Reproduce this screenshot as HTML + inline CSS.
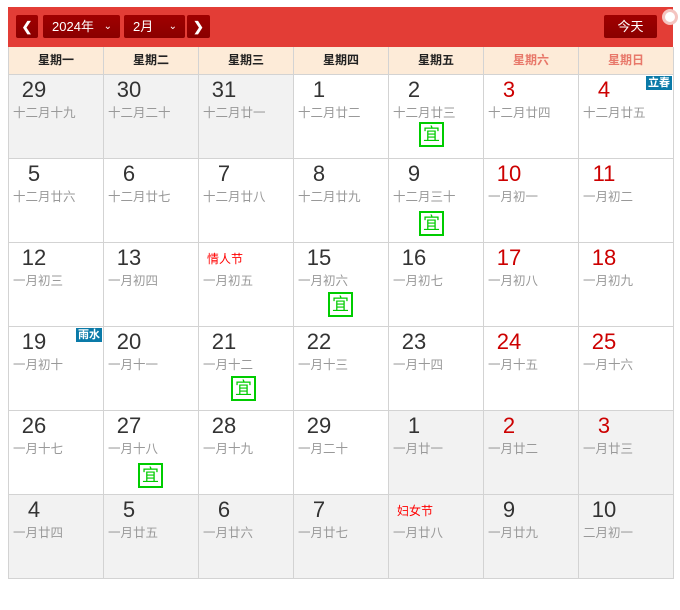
<!DOCTYPE html>
<html><head><meta charset="utf-8"><style>
*{margin:0;padding:0;box-sizing:border-box}
body{width:680px;height:610px;background:#fff;font-family:"Liberation Sans","Noto Sans CJK SC",sans-serif;position:relative;overflow:hidden}
.hd{position:absolute;left:8px;top:7px;width:665px;height:40px;background:#e33d36}
.btn{position:absolute;top:8px;height:23px;background:linear-gradient(#a00000,#8a0000);border-radius:2px;color:#fff;font-size:13px;line-height:23px}
.wk{position:absolute;left:8px;top:47px;width:666px;height:28px;background:#fdebd8;border-left:1px solid #d3d3d3;border-bottom:1px solid #d3d3d3;display:flex}
.wk div{width:95px;border-right:1px solid #d3d3d3;text-align:center;font-size:12px;font-weight:bold;line-height:27px;color:#222}
.wk div.r{color:#e8786a}
.grid{position:absolute;left:8px;top:75px;width:666px;border-left:1px solid #d3d3d3;display:grid;grid-template-columns:repeat(7,95px);grid-auto-rows:84px}
.c{position:relative;border-right:1px solid #d3d3d3;border-bottom:1px solid #d3d3d3;background:#fff}
.c.o{background:#f2f2f2}
.n{position:absolute;left:5px;top:2px;width:40px;text-align:center;font-size:22px;color:#333;line-height:26px}
.c.w .n{color:#cc0000}
.l{position:absolute;left:4px;top:27px;font-size:12.5px;color:#999;white-space:nowrap}
.f{position:absolute;left:8px;top:7px;font-size:12px;color:#f00}
.y{position:absolute;width:25px;height:25px;border:2px solid #0c0;color:#0c0;font-size:17px;line-height:21px;text-align:center}
.t{position:absolute;right:1px;top:1px;background:#0a7aa8;color:#fff;font-size:11px;font-weight:bold;line-height:14px;padding:0 2px}
</style></head><body>
<div class="hd">
 <div class="btn" style="left:8px;width:22px;text-align:center;font-weight:bold">&#10094;</div>
 <div class="btn" style="left:35px;width:77px;padding-left:9px">2024年 <span style="position:absolute;right:8px;font-size:10px">&#8964;</span></div>
 <div class="btn" style="left:116px;width:61px;padding-left:9px">2月 <span style="position:absolute;right:8px;font-size:10px">&#8964;</span></div>
 <div class="btn" style="left:179px;width:23px;text-align:center;font-weight:bold">&#10095;</div>
 <div class="btn" style="left:596px;width:53px;text-align:center">今天</div>
</div>
<div style="position:absolute;left:662px;top:9px;width:16px;height:16px;border-radius:50%;border:3px solid #f4c4c0;background:#fff"></div>
<div class="wk"><div>星期一</div><div>星期二</div><div>星期三</div><div>星期四</div><div>星期五</div><div class="r">星期六</div><div class="r">星期日</div></div>
<div class="grid">
<div class="c o"><div class="n">29</div><div class="l">十二月十九</div></div>
<div class="c o"><div class="n">30</div><div class="l">十二月二十</div></div>
<div class="c o"><div class="n">31</div><div class="l">十二月廿一</div></div>
<div class="c"><div class="n">1</div><div class="l">十二月廿二</div></div>
<div class="c"><div class="n">2</div><div class="l">十二月廿三</div><div class="y" style="left:30px;top:47px">宜</div></div>
<div class="c w"><div class="n">3</div><div class="l">十二月廿四</div></div>
<div class="c w"><div class="n">4</div><div class="l">十二月廿五</div><div class="t">立春</div></div>

<div class="c"><div class="n">5</div><div class="l">十二月廿六</div></div>
<div class="c"><div class="n">6</div><div class="l">十二月廿七</div></div>
<div class="c"><div class="n">7</div><div class="l">十二月廿八</div></div>
<div class="c"><div class="n">8</div><div class="l">十二月廿九</div></div>
<div class="c"><div class="n">9</div><div class="l">十二月三十</div><div class="y" style="left:30px;top:52px">宜</div></div>
<div class="c w"><div class="n">10</div><div class="l">一月初一</div></div>
<div class="c w"><div class="n">11</div><div class="l">一月初二</div></div>

<div class="c"><div class="n">12</div><div class="l">一月初三</div></div>
<div class="c"><div class="n">13</div><div class="l">一月初四</div></div>
<div class="c"><div class="f">情人节</div><div class="l">一月初五</div></div>
<div class="c"><div class="n">15</div><div class="l">一月初六</div><div class="y" style="left:34px;top:49px">宜</div></div>
<div class="c"><div class="n">16</div><div class="l">一月初七</div></div>
<div class="c w"><div class="n">17</div><div class="l">一月初八</div></div>
<div class="c w"><div class="n">18</div><div class="l">一月初九</div></div>

<div class="c"><div class="n">19</div><div class="l">一月初十</div><div class="t">雨水</div></div>
<div class="c"><div class="n">20</div><div class="l">一月十一</div></div>
<div class="c"><div class="n">21</div><div class="l">一月十二</div><div class="y" style="left:32px;top:49px">宜</div></div>
<div class="c"><div class="n">22</div><div class="l">一月十三</div></div>
<div class="c"><div class="n">23</div><div class="l">一月十四</div></div>
<div class="c w"><div class="n">24</div><div class="l">一月十五</div></div>
<div class="c w"><div class="n">25</div><div class="l">一月十六</div></div>

<div class="c"><div class="n">26</div><div class="l">一月十七</div></div>
<div class="c"><div class="n">27</div><div class="l">一月十八</div><div class="y" style="left:34px;top:52px">宜</div></div>
<div class="c"><div class="n">28</div><div class="l">一月十九</div></div>
<div class="c"><div class="n">29</div><div class="l">一月二十</div></div>
<div class="c o"><div class="n">1</div><div class="l">一月廿一</div></div>
<div class="c o w"><div class="n">2</div><div class="l">一月廿二</div></div>
<div class="c o w"><div class="n">3</div><div class="l">一月廿三</div></div>

<div class="c o"><div class="n">4</div><div class="l">一月廿四</div></div>
<div class="c o"><div class="n">5</div><div class="l">一月廿五</div></div>
<div class="c o"><div class="n">6</div><div class="l">一月廿六</div></div>
<div class="c o"><div class="n">7</div><div class="l">一月廿七</div></div>
<div class="c o"><div class="f">妇女节</div><div class="l">一月廿八</div></div>
<div class="c o"><div class="n">9</div><div class="l">一月廿九</div></div>
<div class="c o"><div class="n">10</div><div class="l">二月初一</div></div>
</div>
</body></html>
